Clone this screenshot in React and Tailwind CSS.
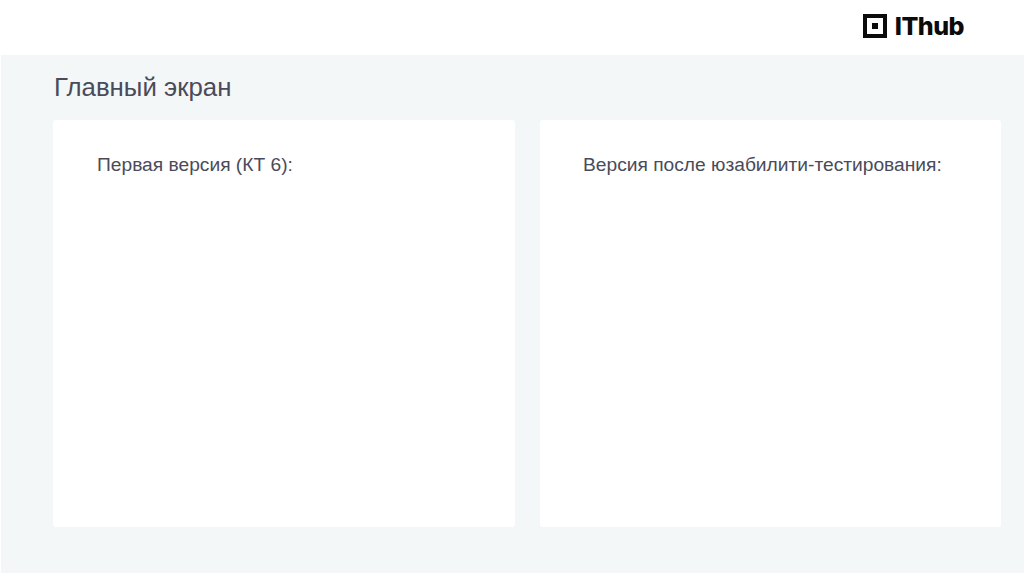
export default function App() {
  return (
    <div className="w-[1024px] h-[574px] overflow-hidden bg-white flex flex-col font-['Liberation_Sans',sans-serif] pb-px pl-px">
      <header className="h-[55px] shrink-0 bg-white flex items-center justify-end pr-[60px] pb-[3px]">
        <div className="flex items-center gap-[8px]">
          <svg width="24" height="24" viewBox="0 0 24 24" className="block">
            <path fillRule="evenodd" d="M0 0H24V24H0ZM4 4V20H20V4Z" fill="#0b0b0b" />
            <rect x="9" y="9" width="6" height="6" fill="#0b0b0b" />
          </svg>
          <span className="font-['Inter',sans-serif] font-extrabold text-[25px] leading-none tracking-[-0.5px] text-[#0b0b0b]">IThub</span>
        </div>
      </header>
      <main className="flex-1 bg-[#f4f7f8] flex flex-col pl-[52px] pr-[22px]">
        <h1 className="h-[65px] pt-[17px] pl-px text-[25.8px] leading-[30px] font-normal text-[#4a4b5a]">Главный экран</h1>
        <div className="flex gap-[25px] h-[407px]">
          <section className="w-[462px] bg-white rounded-[3px] pl-[44px] pt-[33px]">
            <p className="text-[19.2px] leading-[24px] text-[#4a4b5a]">Первая версия (КТ 6):</p>
          </section>
          <section className="w-[461px] bg-white rounded-[3px] pl-[43px] pt-[33px]">
            <p className="text-[19.2px] leading-[24px] text-[#4a4b5a]">Версия после юзабилити-тестирования:</p>
          </section>
        </div>
      </main>
    </div>
  );
}
